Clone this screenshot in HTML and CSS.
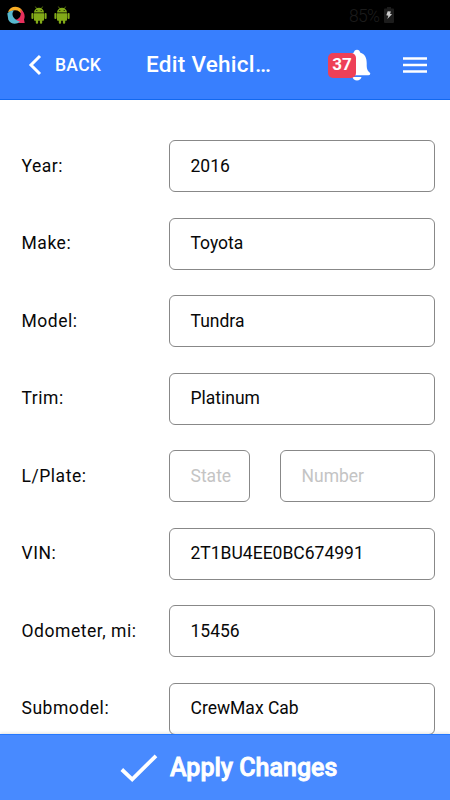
FILE: index.html
```html
<!DOCTYPE html>
<html lang="en">
<head>
<meta charset="utf-8">
<title>Edit Vehicle</title>
<link rel="stylesheet" href="styles.css">
</head>
<body>
<div class="app">
  <div class="status">
    <svg class="swirl" viewBox="0 0 18 18"><path d="M1 6C3 0 11-1 15 4C16.5 6 16.2 8 15.2 9.5C13.7 5 8.5 2.8 4 5.5Z" fill="#f9ad25"/><path d="M13 3.2C17.5 5.5 18.5 9.5 17 13.5L17.7 17H12C9.5 16.6 7.5 15.5 7 13.5C12 14.5 15.5 9.5 13 3.2Z" fill="#e62f5c"/><path d="M7 4.4C3.8 7.5 5.5 13.5 13 15.5C9.5 19 3.5 18.3 1.3 13.7L.3 7.5C2 5.3 4.3 4.2 7 4.4Z" fill="#57b8ce"/></svg>
    <svg class="droid" viewBox="0 0 16 18"><g fill="#82aa18"><path d="M3 6.5A5 4.7 0 0 1 13 6.5ZM3 7.3H13V14Q13 14.8 12.2 14.8H3.8Q3 14.8 3 14Z"/><rect x=".4" y="7" width="2.1" height="6" rx="1"/><rect x="13.5" y="7" width="2.1" height="6" rx="1"/><rect x="4.8" y="13" width="2.3" height="4.8" rx="1"/><rect x="8.9" y="13" width="2.3" height="4.8" rx="1"/></g><path d="M4.4 .6L5.7 2.7M11.6 .6L10.3 2.7" stroke="#82aa18" stroke-width=".7"/><circle cx="5.8" cy="4.5" r=".6"/><circle cx="10.2" cy="4.5" r=".6"/></svg>
    <svg class="droid second" viewBox="0 0 16 18"><g fill="#82aa18"><path d="M3 6.5A5 4.7 0 0 1 13 6.5ZM3 7.3H13V14Q13 14.8 12.2 14.8H3.8Q3 14.8 3 14Z"/><rect x=".4" y="7" width="2.1" height="6" rx="1"/><rect x="13.5" y="7" width="2.1" height="6" rx="1"/><rect x="4.8" y="13" width="2.3" height="4.8" rx="1"/><rect x="8.9" y="13" width="2.3" height="4.8" rx="1"/></g><path d="M4.4 .6L5.7 2.7M11.6 .6L10.3 2.7" stroke="#82aa18" stroke-width=".7"/><circle cx="5.8" cy="4.5" r=".6"/><circle cx="10.2" cy="4.5" r=".6"/></svg>
    <span class="percent">85%</span>
    <svg class="battery" viewBox="0 0 10 16"><path d="M3 0H7V1.5H9Q10 1.5 10 2.5V15Q10 16 9 16H1Q0 16 0 15V2.5Q0 1.5 1 1.5H3Z" fill="#1c1c1c"/><path d="M3.7 4.3L7 4.6 6 6.7 8 7.2 3.3 12 4.4 8.8 2.3 8.3Z" fill="#c8c8c8"/></svg>
  </div>
  <header class="bar">
    <svg class="chevron" viewBox="0 0 14 22"><path d="M12 2L3 11L12 20" fill="none" stroke="#fff" stroke-width="3"/></svg>
    <span class="back">BACK</span>
    <h1 class="title">Edit Vehicl…</h1>
    <div class="alerts">
      <svg class="bell" viewBox="0 0 28 32"><path d="M14 .8C15.7 .8 17 2 17.1 3.6C21.8 5 23.7 9 23.7 14V17C23.7 20.5 25 22.3 27.3 24.2Q27.4 26.3 25.5 26.3H2.5Q.6 26.3 .7 24.2C3 22.3 4.3 20.5 4.3 17V14C4.3 9 6.2 5 10.9 3.6C11 2 12.3 .8 14 .8ZM9.5 28H18.5C18 30.2 16.3 31.4 14 31.4S10 30.2 9.5 28Z" fill="#fff"/></svg>
      <span class="badge">37</span>
    </div>
    <svg class="menu" viewBox="0 0 24 16"><path d="M0 1.5H24M0 8H24M0 14.5H24" stroke="#fff" stroke-width="2.6"/></svg>
  </header>
  <main class="form">
    <div class="row"><span class="label">Year:</span><div class="field"><span>2016</span></div></div>
    <div class="row"><span class="label">Make:</span><div class="field"><span>Toyota</span></div></div>
    <div class="row"><span class="label">Model:</span><div class="field"><span>Tundra</span></div></div>
    <div class="row"><span class="label">Trim:</span><div class="field"><span>Platinum</span></div></div>
    <div class="row"><span class="label">L/Plate:</span><div class="field empty state"><span>State</span></div><div class="field empty"><span>Number</span></div></div>
    <div class="row"><span class="label">VIN:</span><div class="field"><span>2T1BU4EE0BC674991</span></div></div>
    <div class="row"><span class="label">Odometer, mi:</span><div class="field"><span>15456</span></div></div>
    <div class="row"><span class="label">Submodel:</span><div class="field"><span>CrewMax Cab</span></div></div>
  </main>
  <footer class="apply">
    <svg class="check" viewBox="0 0 38 28"><path d="M1.8 15.5L12.2 25.3L36 1.8" fill="none" stroke="#fff" stroke-width="3.8"/></svg>
    <span>Apply Changes</span>
  </footer>
</div>
</body>
</html>
```
FILE: styles.css
```css
* { box-sizing: border-box; }
body { margin: 0; background: #fff; font-family: Roboto, sans-serif; }
.app { display: flex; flex-direction: column; width: 450px; height: 800px; overflow: hidden; }
svg { display: block; flex: none; }

.status { display: flex; align-items: center; flex: none; height: 30px; padding-left: 7px; background: #000; }
.swirl { width: 18px; height: 18px; }
.droid { width: 16px; height: 18px; margin-left: 6px; }
.second { margin-left: 7px; }
.percent { width: 31px; margin: 2px 0 0 279px; color: #1c1c1c; font-size: 17.5px; font-weight: 300; line-height: 20px; white-space: nowrap; letter-spacing: -.7px; }
.battery { width: 10px; height: 16px; margin-left: 4px; }

.bar { display: flex; align-items: center; flex: none; height: 70px; padding-left: 28px; background: #387ffe; border-bottom: 1px solid #1268ef; color: #fff; }
.chevron { width: 14px; height: 22px; }
.back { width: 48px; margin-left: 13px; font-size: 17.5px; font-weight: 500; line-height: 22px; letter-spacing: .3px; }
.title { width: 126px; margin: 0 0 2px 43px; font-size: 22.5px; font-weight: 500; line-height: 28px; white-space: nowrap; letter-spacing: .28px; }
.alerts { position: relative; width: 44px; height: 32px; margin-left: 56px; }
.bell { width: 28px; height: 32px; margin-left: 15px; }
.badge { position: absolute; left: 0; top: 4px; width: 28px; height: 25px; border-radius: 5px; background: #ee4057; font-size: 17px; font-weight: 700; line-height: 23px; text-align: center; }
.menu { width: 24px; height: 16px; margin: 1px 0 0 31px; }

.form { display: flex; flex: 1; flex-direction: column; gap: 25.5px; min-height: 0; padding: 40px 15px 0 21.5px; overflow: hidden; }
.row { display: flex; flex: none; align-items: center; height: 52px; }
.label { width: 147.5px; color: #080808; font-size: 17.5px; letter-spacing: .54px; line-height: 24px; white-space: nowrap; margin-top: -1px; }
.field { display: flex; align-items: center; flex: 1; height: 52px; padding-left: 20.5px; border: 1px solid #888; border-radius: 6px; color: #080808; font-size: 17.5px; line-height: 24px; white-space: nowrap; }
.field span { margin-top: -1px; }
.state { flex: none; width: 81px; margin-right: 30px; }
.field.empty { color: #c4c4c4; }

.apply { display: flex; flex: none; height: 66px; padding-left: 120px; background: #488aff; border-top: 1px solid #2478ff; box-shadow: 0 -1px 3px rgba(0,0,0,.12); color: #fff; font-size: 25px; font-weight: 500; -webkit-text-stroke: .8px #fff; line-height: 65px; white-space: nowrap; }
.check { width: 38px; height: 28px; margin: 19px 12px 0 0; }
```
